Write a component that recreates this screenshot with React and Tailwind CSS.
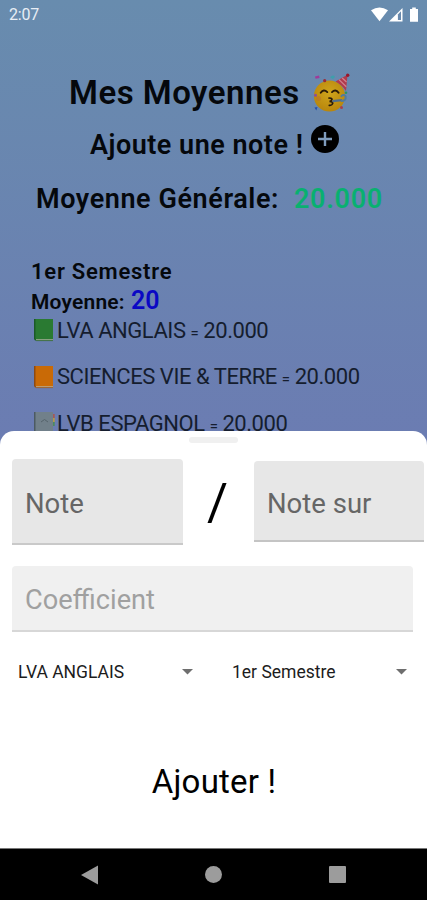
import React from "react";

const subjects = [
  { name: "LVA ANGLAIS", average: "20.000", cover: "#2a7a32", spine: "#1b5a28" },
  { name: "SCIENCES VIE & TERRE", average: "20.000", cover: "#c96a06", spine: "#8f4a10" },
  { name: "LVB ESPAGNOL", average: "20.000", cover: "#71808a", spine: "#4c5a62", tabs: true },
];

const PartyFace = () => (
  <svg width="38" height="40" viewBox="0 0 38 40" className="shrink-0">
    <defs>
      <radialGradient id="face" cx="0.5" cy="0.4" r="0.6">
        <stop offset="0" stopColor="#cfa51c" />
        <stop offset="1" stopColor="#b8860c" />
      </radialGradient>
    </defs>
    <circle cx="17.5" cy="23" r="15.6" fill="url(#face)" />
    <path d="M23.5 8.5 L35.5 1.8 L34 18 Q30 12 23.5 8.5z" fill="#b03a4c" />
    <path d="M27 6.6l7.3 7.2M30.2 4.9l4.3 4" stroke="#d0808c" strokeWidth="1.3" />
    <circle cx="35.7" cy="2.2" r="1.7" fill="#97182c" />
    <path d="M8.7 19.8q3-4.2 6.6-.7M20 19.1q3.5-3.5 6.6.7" fill="none" stroke="#2a1b08" strokeWidth="1.9" strokeLinecap="round" />
    <path d="M17 25q4.6.2 2.2 2.6q-.8.7-1.7.7q4.8.6 2.5 3.2q-1 1-2.7.8" fill="none" stroke="#2a1b08" strokeWidth="1.7" strokeLinecap="round" />
    <path d="M20.5 28.2l9.5-1" stroke="#4e6f90" strokeWidth="2.2" />
    <path d="M29 28q5.5 0 4.6-4.8q-2.8-2.7-4.6.6" fill="none" stroke="#527b9c" strokeWidth="2" />
    <circle cx="6.5" cy="25.5" r="2.5" fill="#b96f32" opacity=".55" />
    <path d="M3 3.5l4-1 .6 2.4-4 .9z" fill="#a03a9a" />
    <path d="M18 4.2q3-3 5-.5l-2 2.500z" fill="#3e9fab" />
    <circle cx="12.7" cy="7.7" r="1.6" fill="#9c2a36" />
    <circle cx="3.5" cy="22.3" r="1.5" fill="#8a4da0" />
    <path d="M2.5 34.5l3-.4-1.2 3.3z" fill="#254fae" />
    <circle cx="29.5" cy="34.5" r="1.5" fill="#a8404c" />
    <circle cx="34" cy="19.7" r="1.3" fill="#2c9460" />
  </svg>
);

const Book = ({ cover, spine, tabs }) => (
  <svg width="22" height="24" viewBox="0 0 22 24" className="shrink-0">
    <path d="M1 1h2.5v21.5H2L1 21z" fill={spine} />
    <path d="M3 20h17v3H3z" fill="#b3b2a2" />
    <path d="M3 22.6h17" stroke={spine} strokeWidth=".8" />
    <rect x="2.5" y="1" width="17.5" height="20.3" fill={cover} />
    {tabs && (
      <>
        <path d="M20 3h1.7v4H20z" fill="#a65a55" />
        <path d="M20 7h1.7v4H20z" fill="#b39a48" />
        <path d="M20 11h1.7v4H20z" fill="#4c8a60" />
        <path d="M8 11l3.5-2.5 3.5 2.5" stroke="#55636b" fill="none" />
      </>
    )}
  </svg>
);

const StatusBar = () => (
  <div className="flex h-[28px] items-center justify-between pl-[9px] pr-[7px] pt-px text-[16px] text-[#e8eef5]">
    <span className="tracking-[-0.2px]">2:07</span>
    <svg width="49" height="16" viewBox="0 0 49 16" fill="#fff">
      <path d="M0 3.3Q8.5-2.3 17 3.3L8.5 14.2z" />
      <path d="M31.5 1v13.500H18z" />
      <path d="M26.9 7.5L30 4.3v8.8h-3.100z" fill="#698aae" />
      <path d="M39 2h2.200V.5h3.600V2H47v12.800h-8z" />
    </svg>
  </div>
);

const Picker = ({ label, className }) => (
  <div className={`flex h-[40px] items-center justify-between ${className}`}>
    <span className="text-[17.5px] text-[#1c1c1c]">{label}</span>
    <svg width="11" height="6" viewBox="0 0 11 6">
      <path d="M0 0h11L5.5 5.5z" fill="#6e6e6e" />
    </svg>
  </div>
);

const GradeSheet = () => (
  <div className="flex h-[417px] flex-col rounded-t-[14px] bg-white">
    <div className="mx-auto mt-[6px] h-[6px] w-[49px] rounded-full bg-[#f0f0f0]" />
    <div className="mt-[16px] flex h-[86px] items-start pl-[12px]">
      <div className="flex h-[86px] w-[171px] items-center rounded-t-[4px] border-b-2 border-[#c9c9c9] bg-[#e7e7e7] pl-[13px] pt-[5px] text-[27.5px] text-[#666]">
        Note
      </div>
      <div className="w-[69px] pt-[12px] text-center text-[51px] leading-[64px] text-black">/</div>
      <div className="ml-[2px] mt-[2px] flex h-[81px] w-[170px] items-center rounded-t-[4px] border-b-2 border-[#c4c4c4] bg-[#e7e7e7] pl-[13px] pt-[6px] text-[27.5px] text-[#666]">
        Note sur
      </div>
    </div>
    <div className="ml-[12px] mt-[21px] flex h-[66px] w-[401px] items-center rounded-t-[4px] border-b-2 border-[#d7d7d7] bg-[#f0f0f0] pl-[13px] pt-[4px] text-[27.2px] text-[#a0a0a0]">
      Coefficient
    </div>
    <div className="mt-[20px] flex">
      <Picker label="LVA ANGLAIS" className="w-[213px] pl-[18px] pr-[20px]" />
      <Picker label="1er Semestre" className="w-[214px] pl-[19px] pr-[20px]" />
    </div>
    <button className="mt-[66px] h-[48px] pl-px text-center text-[33px] leading-[48px] tracking-[0.2px] text-black">Ajouter !</button>
  </div>
);

const NavBar = () => (
  <div className="flex h-[52px] items-center justify-between border-t border-[#777] bg-black pl-[81px] pr-[81px]">
    <svg width="17" height="20" viewBox="0 0 17 20">
      <path d="M0 10L17 .5v19z" fill="#9c9c9c" />
    </svg>
    <div className="size-[17px] rounded-full bg-[#9c9c9c]" />
    <div className="size-[17px] rounded-[1px] bg-[#9c9c9c]" />
  </div>
);

const App = () => {
  return (
    <div className="h-[900px] w-[427px] overflow-hidden font-['Roboto','Liberation_Sans',sans-serif]">
      <div className="h-[848px] bg-linear-to-b from-[#688cae] from-0% to-[#6b7cb2] to-52%">
        <div className="h-[431px] overflow-hidden text-[#05080c]">
          <StatusBar />
          <div className="mt-[40px] flex h-[50px] items-center pl-[69px]">
            <h1 className="w-[243px] whitespace-nowrap text-[33px] font-semibold tracking-[0.5px]">Mes Moyennes</h1>
            <PartyFace />
          </div>
          <div className="flex h-[53px] items-center pl-[90px]">
            <h2 className="w-[221px] whitespace-nowrap pt-[2px] text-[27px] font-semibold tracking-[0.5px]">Ajoute une note !</h2>
            <svg width="28" height="28" viewBox="0 0 28 28" className="mb-[11px]">
              <circle cx="14" cy="14" r="14" fill="#000" />
              <path d="M14 7v14M7 14h14" stroke="#7f9cbd" strokeWidth="2.4" />
            </svg>
          </div>
          <div className="flex h-[55px] items-center pl-[36px] pt-px text-[27px] font-semibold">
            <span className="w-[258px] whitespace-nowrap tracking-[0.58px]">Moyenne Générale:</span>
            <span className="tracking-[0.7px] text-[#09b070]">20.000</span>
          </div>
          <div className="pl-[31px] pt-[32px]">
            <h3 className="h-[27px] text-[22px] font-semibold leading-[27px] tracking-[0.75px]">1er Semestre</h3>
            <div className="flex h-[32px] items-baseline font-semibold leading-[31px]">
              <span className="w-[100px] text-[21px] tracking-[0.2px]">Moyenne:</span>
              <span className="text-[25px] text-[#0a08c4]">20</span>
            </div>
            {subjects.map((s) => (
              <div key={s.name} className="mb-[20.5px] flex h-[26px] items-center whitespace-nowrap pl-[2px] text-[#151d2e]">
                <Book cover={s.cover} spine={s.spine} tabs={s.tabs} />
                <span className="ml-[2px] text-[22px] tracking-[-0.45px]">
                  {s.name} <span className="text-[15px]">=</span> {s.average}
                </span>
              </div>
            ))}
          </div>
        </div>
        <GradeSheet />
      </div>
      <NavBar />
    </div>
  );
};

export default App;
